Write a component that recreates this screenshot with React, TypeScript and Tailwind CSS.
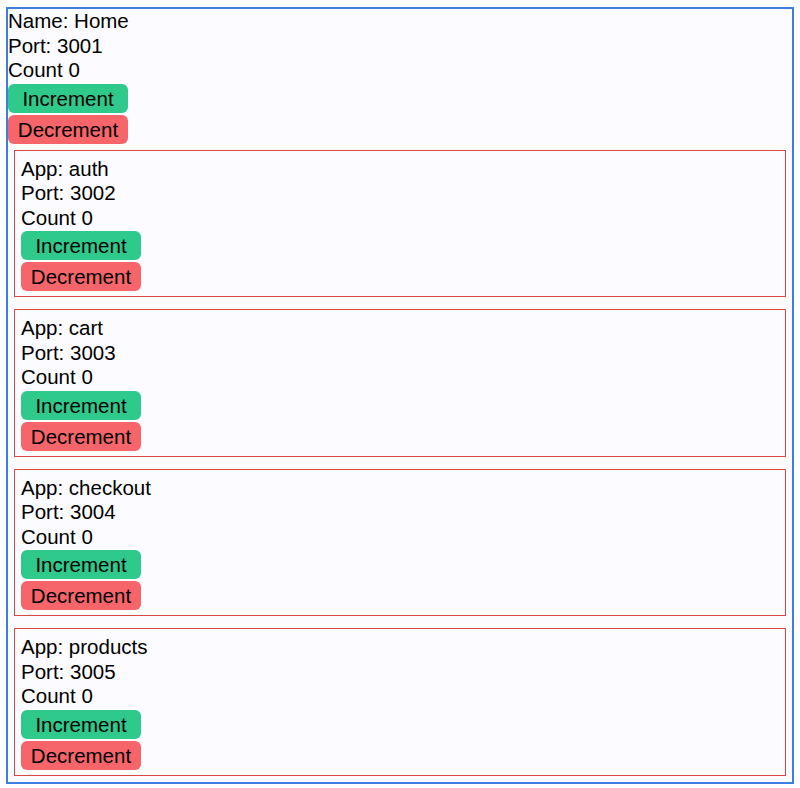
import React, { useState } from 'react';

const apps = [
  { name: 'auth', port: 3002 },
  { name: 'cart', port: 3003 },
  { name: 'checkout', port: 3004 },
  { name: 'products', port: 3005 },
];

function Counter({ label, port }: { label: string; port: number }) {
  const [count, setCount] = useState(0);
  return (
    <div>
      <div>{label}</div>
      <div>Port: {port}</div>
      <div>Count {count}</div>
      <button
        onClick={() => setCount(count + 1)}
        className="block w-[120px] h-[29px] mt-[1px] rounded-[6px] bg-[#2ec98b] text-black text-[20.5px] leading-[29px] text-center"
      >
        Increment
      </button>
      <button
        onClick={() => setCount(count - 1)}
        className="block w-[120px] h-[29px] mt-[2px] rounded-[6px] bg-[#f6656a] text-black text-[20.5px] leading-[29px] text-center"
      >
        Decrement
      </button>
    </div>
  );
}

export default function App() {
  return (
    <div className="bg-white min-h-[788px] pt-[7px] font-['Liberation_Sans',Arial,sans-serif] text-black text-[20.5px] leading-[24.5px]">
      <div className="mx-[6px] border-2 border-[#3d7fe0] bg-[#fcfbff]">
        <Counter label="Name: Home" port={3001} />
        <div className="flex flex-col gap-[12px] px-[6px] pt-[6px] pb-[6px]">
          {apps.map((a) => (
            <div key={a.name} className="border border-[#d84848] px-[6px] pt-[6px] pb-[5px]">
              <Counter label={`App: ${a.name}`} port={a.port} />
            </div>
          ))}
        </div>
      </div>
    </div>
  );
}
